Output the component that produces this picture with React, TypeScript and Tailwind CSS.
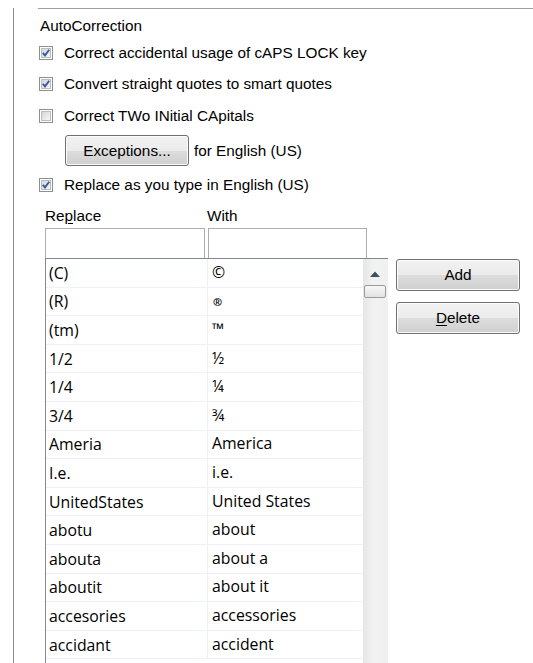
import React from "react";

const ROWS: [string, string][] = [
  ["(C)", "©"],
  ["(R)", "®"],
  ["(tm)", "™"],
  ["1/2", "½"],
  ["1/4", "¼"],
  ["3/4", "¾"],
  ["Ameria", "America"],
  ["I.e.", "i.e."],
  ["UnitedStates", "United States"],
  ["abotu", "about"],
  ["abouta", "about a"],
  ["aboutit", "about it"],
  ["accesories", "accessories"],
  ["accidant", "accident"],
];

const btn =
  "flex items-center justify-center rounded-[3px] border border-[#707070] text-black bg-[linear-gradient(to_bottom,#f2f2f2_0%,#ebebeb_50%,#dddddd_50%,#cfcfcf_100%)] shadow-[inset_0_0_0_1px_#fcfcfc]";

function Check({ checked }: { checked: boolean }) {
  return (
    <span className="relative flex h-[14px] w-[14px] shrink-0 items-center justify-center border border-[#8e8f8f] bg-white">
      <span className="h-[10px] w-[10px] border border-[#b9bdc3] bg-[linear-gradient(135deg,#d3d6db,#f7f7f7)]" />
      {checked && (
        <svg className="absolute left-0 top-0" width="12" height="12" viewBox="0 0 12 12">
          <path d="M2.8 5.8 L5 8.4 L9.2 2.8" fill="none" stroke="#3c5a94" strokeWidth="1.9" />
        </svg>
      )}
    </span>
  );
}

function CheckRow({ checked, label, h }: { checked: boolean; label: string; h: string }) {
  return (
    <div className={`flex items-center gap-[11px] pl-[25px] ${h}`}>
      <Check checked={checked} />
      <span>{label}</span>
    </div>
  );
}

export default function App() {
  return (
    <div className="h-[663px] w-[533px] overflow-hidden bg-white pl-[13px] pt-[7px] font-['Liberation_Sans',Arial,sans-serif] text-[15.3px] leading-none text-black">
      <div className="h-full border-l border-[#8a8a8a]">
        <div className="ml-[24px] mt-[1px] border-t border-[#a0a0a0]" />
        <div className="mt-[8px] flex h-[17px] items-center pl-[26px]">AutoCorrection</div>
        <div className="mt-[4px]" />
        <CheckRow checked h="h-[30px]" label="Correct accidental usage of cAPS LOCK key" />
        <CheckRow checked h="h-[32px]" label="Convert straight quotes to smart quotes" />
        <CheckRow checked={false} h="h-[31px]" label="Correct TWo INitial CApitals" />
        <div className="mt-[4px] flex h-[31px] items-center pl-[51px]">
          <button className={`${btn} h-[31px] w-[124px]`}>Exceptions...</button>
          <span className="ml-[5px]">for English (US)</span>
        </div>
        <div className="mt-[3px]" />
        <CheckRow checked h="h-[31px]" label="Replace as you type in English (US)" />
        <div className="mt-[8px] flex h-[16px] items-center pl-[31px]">
          <span className="w-[162px]">
            Re<span className="underline underline-offset-2">p</span>lace
          </span>
          <span>With</span>
        </div>
        <div className="mt-[4px] flex items-start pl-[31px]">
          <div className="flex flex-col">
            <div className="flex h-[30px]">
              <div className="w-[160px] border border-b-0 border-[#abadb3] bg-white" />
              <div className="ml-[3px] w-[159px] border border-b-0 border-[#abadb3] bg-white" />
            </div>
            <div className="flex w-[343px] border-l border-t border-[#828790] font-['Open_Sans',sans-serif] text-[15.8px]">
              <div className="flex-1">
                {ROWS.map(([a, b]) => (
                  <div key={a} className="flex h-[28.6px] items-center border-b border-[#eef1f6]">
                    <span className="w-[162px] border-r border-[#eef1f6] pl-[3px] leading-[28px]">{a}</span>
                    <span className={b === "®" ? "pl-[5px] text-[11px] font-bold" : "pl-[4px]"}>{b}</span>
                  </div>
                ))}
                <div className="h-[28.6px]" />
              </div>
              <div className="relative w-[25px] shrink-0 bg-[linear-gradient(to_right,#e6e6e6,#f2f2f2_40%,#f0f0f0)]">
                <svg className="absolute left-[7px] top-[12px]" width="10" height="6" viewBox="0 0 10 6">
                  <polygon points="0,6 5,0.5 10,6" fill="#3f4d63" />
                </svg>
                <div className="absolute left-[1px] top-[26px] h-[13px] w-[22px] rounded-[2px] border border-[#9a9a9a] bg-[linear-gradient(to_bottom,#f7f7f7,#e2e2e2)]" />
              </div>
            </div>
          </div>
          <div className="ml-[8px] mt-[31px] flex flex-col gap-[11px]">
            <button className={`${btn} h-[32px] w-[124px]`}>Add</button>
            <button className={`${btn} h-[32px] w-[124px]`}>
              <span>
                <span className="underline underline-offset-2">D</span>elete
              </span>
            </button>
          </div>
        </div>
      </div>
    </div>
  );
}
